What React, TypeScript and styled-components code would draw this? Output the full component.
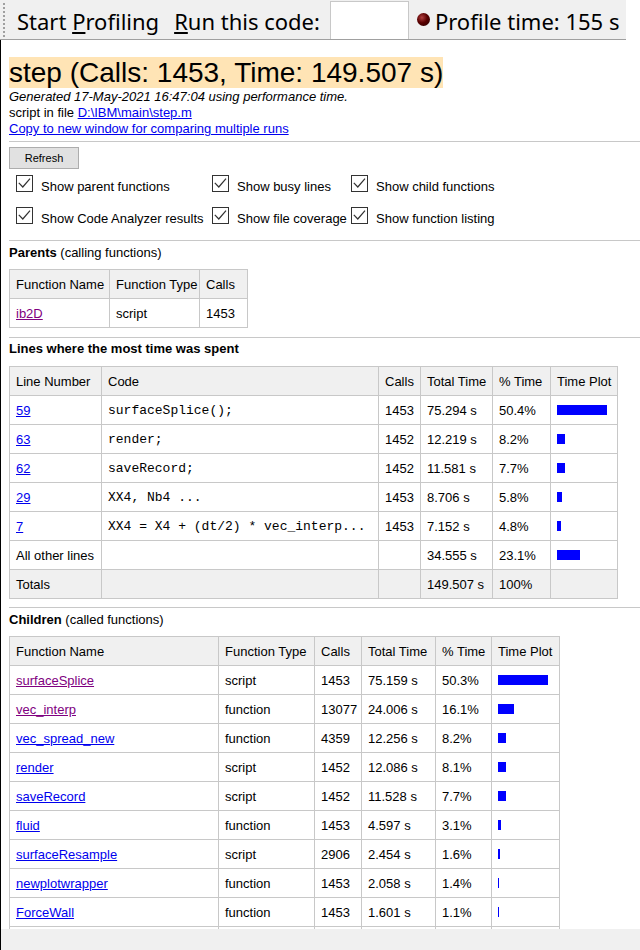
import styled, { createGlobalStyle } from 'styled-components';

const GlobalStyle = createGlobalStyle`
  *, *::before, *::after { box-sizing: border-box; }
  html, body { margin: 0; padding: 0; background: #fff; }
  body {
    font-family: "Liberation Sans", Arial, sans-serif;
    font-size: 13px;
    color: #000;
  }
`;

const Window = styled.div`
  width: 640px;
  height: 950px;
  display: flex;
  flex-direction: column;
  overflow: hidden;
`;

const Toolbar = styled.div`
  width: 626px;
  height: 40px;
  flex: none;
  display: flex;
  align-items: center;
  padding-left: 3px;
  background: #f0f0f0;
  border-bottom: 1px solid #a0a0a0;
  overflow: hidden;
  white-space: nowrap;
`;

const Grip = styled.div`
  width: 2px;
  align-self: stretch;
  margin: 3px 12px 2px 0;
  background: repeating-linear-gradient(to bottom, #a0a0a0 0 2px, transparent 2px 4px);
`;

const ToolLabel = styled.span<{ $gap?: number }>`
  font-family: "Noto Sans", "Open Sans", sans-serif;
  font-size: 22px;
  line-height: 30px;
  padding-top: 2px;
  color: #000;
  margin-right: ${p => p.$gap ?? 0}px;
`;

const CodeInput = styled.div`
  width: 79px;
  height: 38px;
  align-self: flex-end;
  background: #fff;
  border: 1px solid #c8c8c8;
  border-bottom: 0;
  margin-right: 8px;
`;

const Ball = styled.span`
  width: 13px;
  height: 13px;
  flex: none;
  border-radius: 50%;
  margin-right: 5px;
  background: radial-gradient(circle at 38% 35%, #b04040 0, #5a0000 45%, #220000 100%);
`;

const Main = styled.div`
  flex: 1;
  overflow: hidden;
  border-left: 1px solid #000;
  padding-left: 8px;
`;

const BottomBar = styled.div`
  height: 21px;
  flex: none;
  background: #f0f0f0;
  border-left: 1px solid #000;
`;

const Title = styled.div`
  margin-top: 16px;
  line-height: 33px;
  font-size: 28px;

  span {
    background: #ffe4b5;
  }
`;

const InfoLine = styled.div<{ $italic?: boolean }>`
  line-height: 16px;
  font-style: ${p => (p.$italic ? 'italic' : 'normal')};
`;

const Link = styled.a<{ $visited?: boolean }>`
  color: ${p => (p.$visited ? '#800080' : '#0000ee')};
  text-decoration: underline;
`;

const Rule = styled.div<{ $top: number }>`
  height: 1px;
  margin-top: ${p => p.$top}px;
  background: #c8c8c8;
`;

const RefreshButton = styled.button`
  display: block;
  width: 70px;
  height: 22px;
  margin-top: 5px;
  padding: 0;
  font-family: "Liberation Sans", Arial, sans-serif;
  font-size: 11px;
  color: #000;
  background: #e1e1e1;
  border: 1px solid #adadad;
`;

const OptionGrid = styled.div`
  display: grid;
  grid-template-columns: 196px 139px auto;
  row-gap: 12px;
  margin-top: 6px;
  padding-left: 7px;
`;

const Option = styled.label`
  display: flex;
  align-items: baseline;
  gap: 8px;
  line-height: 16px;
  white-space: nowrap;
`;

const CheckBox = styled.span`
  width: 17px;
  height: 17px;
  flex: none;
  border: 1px solid #333;
  background: #fff;
  display: flex;

  svg {
    display: block;
  }
`;

const SectionTitle = styled.div<{ $top: number }>`
  margin-top: ${p => p.$top}px;
  line-height: 16px;

  b {
    font-weight: bold;
  }
`;

const Table = styled.table<{ $top: number; $width: number }>`
  margin-top: ${p => p.$top}px;
  width: ${p => p.$width}px;
  border-collapse: collapse;
  table-layout: fixed;

  th,
  td {
    height: 29px;
    padding: 0 6px;
    border: 1px solid #c8c8c8;
    text-align: left;
    font-weight: normal;
    white-space: nowrap;
    overflow: hidden;
  }

  th {
    background: #f0f0f0;
  }
`;

const TotalsRow = styled.tr`
  td {
    background: #f0f0f0;
  }
`;

const CodeCell = styled.td`
  font-family: "Liberation Mono", "Courier New", monospace;
  white-space: pre !important;
`;

const Bar = styled.div`
  height: 10px;
  background: #0000ff;
`;

function Check() {
  return (
    <CheckBox>
      <svg width="15" height="15" viewBox="0 0 15 15">
        <polyline points="1.8,6.8 5.8,11 13,2.6" fill="none" stroke="#333" strokeWidth="1.2" />
      </svg>
    </CheckBox>
  );
}

const options = [
  'Show parent functions',
  'Show busy lines',
  'Show child functions',
  'Show Code Analyzer results',
  'Show file coverage',
  'Show function listing',
];

const busyLines = [
  { line: '59', code: 'surfaceSplice();', calls: '1453', total: '75.294 s', pct: '50.4%', bar: 50 },
  { line: '63', code: 'render;', calls: '1452', total: '12.219 s', pct: '8.2%', bar: 8 },
  { line: '62', code: 'saveRecord;', calls: '1452', total: '11.581 s', pct: '7.7%', bar: 8 },
  { line: '29', code: 'XX4, Nb4 ...', calls: '1453', total: '8.706 s', pct: '5.8%', bar: 5 },
  { line: '7', code: 'XX4 = X4 + (dt/2) * vec_interp...', calls: '1453', total: '7.152 s', pct: '4.8%', bar: 4 },
];

const children = [
  { name: 'surfaceSplice', type: 'script', calls: '1453', total: '75.159 s', pct: '50.3%', bar: 50, visited: true },
  { name: 'vec_interp', type: 'function', calls: '13077', total: '24.006 s', pct: '16.1%', bar: 16, visited: true },
  { name: 'vec_spread_new', type: 'function', calls: '4359', total: '12.256 s', pct: '8.2%', bar: 8 },
  { name: 'render', type: 'script', calls: '1452', total: '12.086 s', pct: '8.1%', bar: 8 },
  { name: 'saveRecord', type: 'script', calls: '1452', total: '11.528 s', pct: '7.7%', bar: 8 },
  { name: 'fluid', type: 'function', calls: '1453', total: '4.597 s', pct: '3.1%', bar: 3 },
  { name: 'surfaceResample', type: 'script', calls: '2906', total: '2.454 s', pct: '1.6%', bar: 2 },
  { name: 'newplotwrapper', type: 'function', calls: '1453', total: '2.058 s', pct: '1.4%', bar: 1 },
  { name: 'ForceWall', type: 'function', calls: '1453', total: '1.601 s', pct: '1.1%', bar: 1 },
];

function Cols({ widths }: { widths: number[] }) {
  return (
    <colgroup>
      {widths.map((w, i) => (
        <col key={i} style={{ width: w }} />
      ))}
    </colgroup>
  );
}

export default function App() {
  return (
    <Window>
      <GlobalStyle />
      <Toolbar>
        <Grip />
        <ToolLabel $gap={15}>
          Start <u>P</u>rofiling
        </ToolLabel>
        <ToolLabel $gap={10}>
          <u>R</u>un this code:
        </ToolLabel>
        <CodeInput />
        <Ball />
        <ToolLabel>Profile time: 155 s</ToolLabel>
      </Toolbar>

      <Main>
        <Title>
          <span>step (Calls: 1453, Time: 149.507 s)</span>
        </Title>
        <InfoLine $italic>Generated 17-May-2021 16:47:04 using performance time.</InfoLine>
        <InfoLine>
          script in file <Link href="#">D:\IBM\main\step.m</Link>
        </InfoLine>
        <InfoLine>
          <Link href="#">Copy to new window for comparing multiple runs</Link>
        </InfoLine>

        <Rule $top={4} />
        <RefreshButton>Refresh</RefreshButton>
        <OptionGrid>
          {options.map(o => (
            <Option key={o}>
              <Check />
              {o}
            </Option>
          ))}
        </OptionGrid>

        <Rule $top={13} />
        <SectionTitle $top={4}>
          <b>Parents</b> (calling functions)
        </SectionTitle>
        <Table $top={8} $width={238}>
          <Cols widths={[100, 90, 48]} />
          <thead>
            <tr>
              <th>Function Name</th>
              <th>Function Type</th>
              <th>Calls</th>
            </tr>
          </thead>
          <tbody>
            <tr>
              <td>
                <Link href="#" $visited>
                  ib2D
                </Link>
              </td>
              <td>script</td>
              <td>1453</td>
            </tr>
          </tbody>
        </Table>

        <Rule $top={9} />
        <SectionTitle $top={3}>
          <b>Lines where the most time was spent</b>
        </SectionTitle>
        <Table $top={9} $width={608}>
          <Cols widths={[92, 277, 42, 72, 58, 67]} />
          <thead>
            <tr>
              <th>Line Number</th>
              <th>Code</th>
              <th>Calls</th>
              <th>Total Time</th>
              <th>% Time</th>
              <th>Time Plot</th>
            </tr>
          </thead>
          <tbody>
            {busyLines.map(r => (
              <tr key={r.line}>
                <td>
                  <Link href="#">{r.line}</Link>
                </td>
                <CodeCell>{r.code}</CodeCell>
                <td>{r.calls}</td>
                <td>{r.total}</td>
                <td>{r.pct}</td>
                <td>
                  <Bar style={{ width: r.bar }} />
                </td>
              </tr>
            ))}
            <tr>
              <td>All other lines</td>
              <td />
              <td />
              <td>34.555 s</td>
              <td>23.1%</td>
              <td>
                <Bar style={{ width: 23 }} />
              </td>
            </tr>
            <TotalsRow>
              <td>Totals</td>
              <td />
              <td />
              <td>149.507 s</td>
              <td>100%</td>
              <td />
            </TotalsRow>
          </tbody>
        </Table>

        <Rule $top={8} />
        <SectionTitle $top={4}>
          <b>Children</b> (called functions)
        </SectionTitle>
        <Table $top={8} $width={550}>
          <Cols widths={[209, 96, 47, 74, 56, 68]} />
          <thead>
            <tr>
              <th>Function Name</th>
              <th>Function Type</th>
              <th>Calls</th>
              <th>Total Time</th>
              <th>% Time</th>
              <th>Time Plot</th>
            </tr>
          </thead>
          <tbody>
            {children.map(c => (
              <tr key={c.name}>
                <td>
                  <Link href="#" $visited={c.visited}>
                    {c.name}
                  </Link>
                </td>
                <td>{c.type}</td>
                <td>{c.calls}</td>
                <td>{c.total}</td>
                <td>{c.pct}</td>
                <td>
                  <Bar style={{ width: c.bar }} />
                </td>
              </tr>
            ))}
            <tr>
              <td />
              <td />
              <td />
              <td />
              <td />
              <td />
            </tr>
          </tbody>
        </Table>
      </Main>
      <BottomBar />
    </Window>
  );
}
